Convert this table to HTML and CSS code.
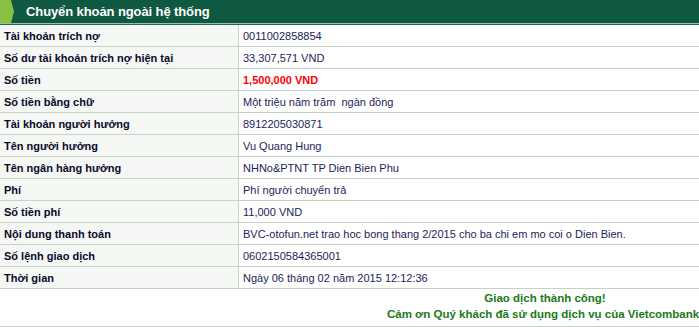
FILE: index.html
```html
<!DOCTYPE html>
<html lang="vi">
<head>
<meta charset="utf-8">
<title>Chuyển khoản ngoài hệ thống</title>
<link rel="stylesheet" href="styles.css">
</head>
<body>
<div class="page">
  <div class="header">
    <span class="tab"></span>
    <h1 class="title">Chuyển khoản ngoài hệ thống</h1>
  </div>
  <table class="info">
    <tbody>
      <tr><th>Tài khoản trích nợ</th><td>0011002858854</td></tr>
      <tr><th>Số dư tài khoản trích nợ hiện tại</th><td>33,307,571 VND</td></tr>
      <tr><th>Số tiền</th><td class="amount">1,500,000 VND</td></tr>
      <tr><th>Số tiền bằng chữ</th><td>Một triệu năm trăm &nbsp;ngàn đồng</td></tr>
      <tr><th>Tài khoản người hưởng</th><td>8912205030871</td></tr>
      <tr><th>Tên người hưởng</th><td>Vu Quang Hung</td></tr>
      <tr><th>Tên ngân hàng hưởng</th><td>NHNo&amp;PTNT TP Dien Bien Phu</td></tr>
      <tr><th>Phí</th><td>Phí người chuyển trả</td></tr>
      <tr><th>Số tiền phí</th><td>11,000 VND</td></tr>
      <tr><th>Nội dung thanh toán</th><td>BVC-otofun.net trao hoc bong thang 2/2015 cho ba chi em mo coi o Dien Bien.</td></tr>
      <tr><th>Số lệnh giao dịch</th><td>0602150584365001</td></tr>
      <tr><th>Thời gian</th><td>Ngày 06 tháng 02 năm 2015 12:12:36</td></tr>
    </tbody>
  </table>
  <div class="result">
    <p>Giao dịch thành công!</p>
    <p>Cảm ơn Quý khách đã sử dụng dịch vụ của Vietcombank!</p>
  </div>
</div>
</body>
</html>
```
FILE: styles.css
```css
html, body {
  margin: 0;
  padding: 0;
  background: #ffffff;
  overflow: hidden;
}
.page {
  width: 1090px;
  font-family: "Liberation Sans", Arial, sans-serif;
}
.header {
  display: flex;
  align-items: center;
  height: 23px;
  background: #0f5943;
  border-bottom: 1px solid #9dbcae;
  box-shadow: 0 1px 0 #1f6b50;
  margin-bottom: 1px;
}
.tab {
  width: 14px;
  height: 23px;
  background: #86c142;
  clip-path: polygon(0 0, 11px 0, 14px 50%, 11px 100%, 0 100%);
}
.title {
  margin: 0 0 0 12px;
  font-size: 13px;
  font-weight: bold;
  color: #ffffff;
  letter-spacing: -0.1px;
}
.info {
  width: 100%;
  border-collapse: collapse;
  font-size: 11px;
}
.info th,
.info td {
  height: 21px;
  padding: 0 4px;
  border-bottom: 1px solid #c7d3c7;
  text-align: left;
  vertical-align: middle;
}
.info th {
  width: 230px;
  font-weight: bold;
  color: #0a0a2a;
  background: #f4f7f4;
  border-right: 1px solid #c7d3c7;
}
.info td {
  color: #1d1d58;
}
.info td.amount {
  color: #ff0000;
  font-weight: bold;
}
.result {
  height: 36px;
  border-bottom: 1px solid #c7d3c7;
  padding-top: 1px;
  text-align: center;
  font-size: 11.5px;
  font-weight: bold;
  color: #1a7a1a;
}
.result p {
  margin: 0;
  line-height: 16px;
}
```
